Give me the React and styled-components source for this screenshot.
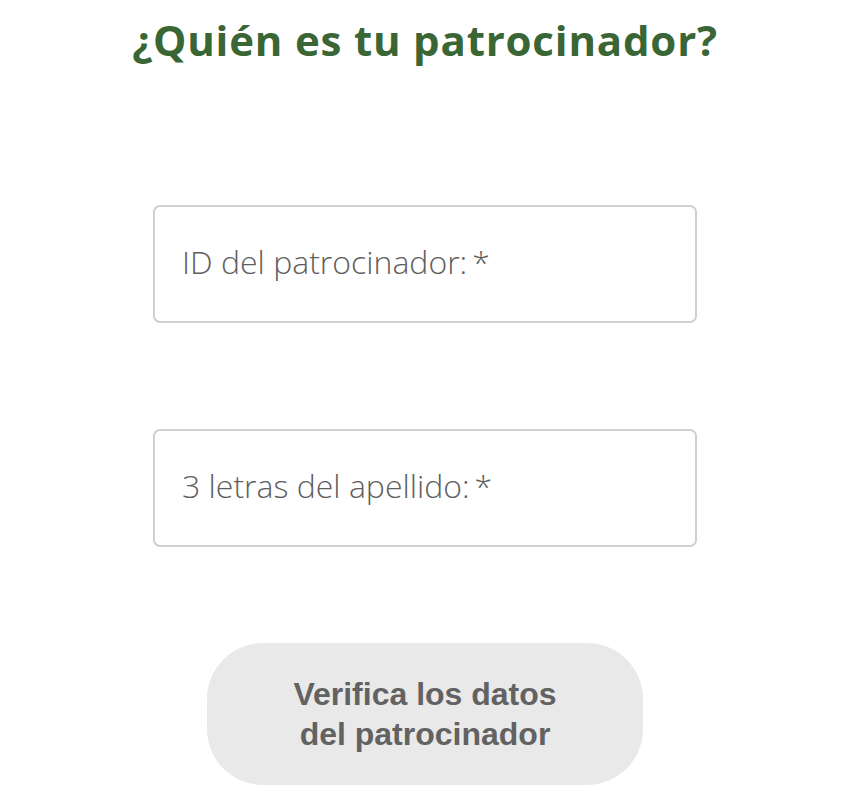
import React from "react";
import styled, { createGlobalStyle } from "styled-components";

const Global = createGlobalStyle`
  html, body { margin: 0; padding: 0; background: #fff; }
  * { box-sizing: border-box; }
`;

const Page = styled.div`
  width: 850px;
  height: 800px;
  display: flex;
  flex-direction: column;
  align-items: center;
  padding-top: 12px;
  overflow: hidden;
`;

const Title = styled.h1`
  margin: 0;
  font-family: "Open Sans", sans-serif;
  font-weight: 700;
  font-size: 42px;
  line-height: 56px;
  letter-spacing: 0.8px;
  color: #3a6636;
`;

const Form = styled.div`
  display: flex;
  flex-direction: column;
  align-items: center;
  margin-top: 137px;
  gap: 106px;
`;

const Field = styled.div`
  width: 544px;
  height: 118px;
  border: 2px solid #cfcfcf;
  border-radius: 7px;
  display: flex;
  align-items: center;
  padding: 0 0 5px 27px;
  font-family: "Open Sans", sans-serif;
  font-weight: 300;
  font-size: 32px;
  color: #5e5e5e;
`;

const Required = styled.span`
  margin-left: 5px;
`;

const Button = styled.button`
  margin-top: 96px;
  width: 436px;
  height: 142px;
  border: none;
  border-radius: 56px;
  background: #e9e9e9;
  font-family: "Liberation Sans", Arial, sans-serif;
  font-weight: 700;
  font-size: 32px;
  line-height: 40px;
  color: #626262;
  padding: 0 20px;
`;

export default function App() {
  return (
    <>
      <Global />
      <Page>
        <Title>¿Quién es tu patrocinador?</Title>
        <Form>
          <Field>
            ID del patrocinador:<Required>*</Required>
          </Field>
          <Field>
            3 letras del apellido:<Required>*</Required>
          </Field>
        </Form>
        <Button>
          Verifica los datos
          <br />
          del patrocinador
        </Button>
      </Page>
    </>
  );
}
